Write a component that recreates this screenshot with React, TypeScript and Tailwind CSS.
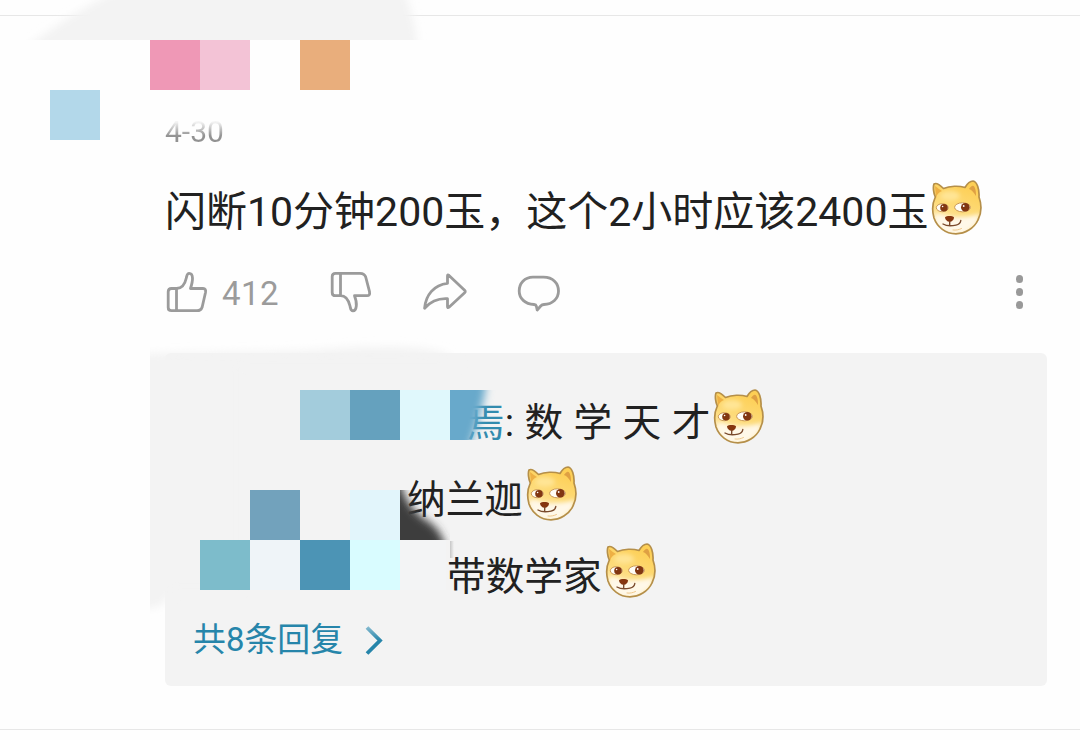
import { useId, type ReactNode } from 'react';

interface Reply {
  id: number;
  author?: string;
  text: string;
  className: string;
}

interface Tile {
  x: number;
  y: number;
  color: string;
}

const TILE_SIZE = 50;

const HEAD_PATH =
  'M4 4C7 2 11 6 13.5 8.5C20 5.8 29 5.6 35 7.5C37 4 40 1 43 1C47 1.5 49.5 9 49 17C51.5 24 51.500 33 48 40C44 48.500 35 53.800 26 53.800C15 53.800 7 46.500 4 38C2 31 2.500 23 5.300 17C3.500 13 2.800 7 4 4Z';

const replies: Reply[] = [
  { id: 1, author: '焉', text: ': 数 学 天 才', className: 'pl-[301px] [word-spacing:0.8px]' },
  { id: 2, text: '纳兰迦', className: 'pl-[242px]' },
  { id: 3, text: '带数学家', className: 'pl-[282px]' },
];

const tiles: Tile[] = [
  { x: 150, y: 40, color: '#ef98b6' },
  { x: 200, y: 40, color: '#f3c3d6' },
  { x: 300, y: 40, color: '#e9ae7c' },
  { x: 50, y: 90, color: '#b3d8ea' },
  { x: 300, y: 390, color: '#a3ccdc' },
  { x: 350, y: 390, color: '#65a1be' },
  { x: 400, y: 390, color: '#e0f8fc' },
  { x: 250, y: 490, color: '#72a2bc' },
  { x: 350, y: 490, color: '#e2f5fb' },
  { x: 200, y: 540, color: '#7dbccb' },
  { x: 250, y: 540, color: '#eff4f8' },
  { x: 300, y: 540, color: '#4c94b5' },
  { x: 350, y: 540, color: '#d9fcff' },
];

const Doge = () => {
  const id = useId();
  return (
    <svg width="54" height="56" viewBox="0 0 54 56" fill="none" className="shrink-0">
      <defs>
        <linearGradient id={`${id}fur`} x1="38" y1="6" x2="20" y2="54" gradientUnits="userSpaceOnUse">
          <stop offset="0" stopColor="#fdcf55" />
          <stop offset="0.5" stopColor="#fddb7a" />
          <stop offset="1" stopColor="#ffedc0" />
        </linearGradient>
        <filter id={`${id}soft`} x="-20%" y="-20%" width="140%" height="140%">
          <feGaussianBlur stdDeviation="2" />
        </filter>
        <clipPath id={`${id}head`}>
          <path d={HEAD_PATH} />
        </clipPath>
      </defs>
      <g clipPath={`url(#${id}head)`}>
        <rect width="54" height="56" fill={`url(#${id}fur)`} />
        <g filter={`url(#${id}soft)`}>
          <path d="M4 35C8 33 13 34 18 37C25 38 30 37 35 37C40 36 46 36 50 33L47 44L34 54H16L6 46Z" fill="#fff8e8" />
          <ellipse cx="20" cy="16" rx="10" ry="5" fill="#ffe595" />
        </g>
        <path d="M5 6C8 8 10 10 12 11C9 12 7 14 6 18Z" fill="#eeb044" />
        <path d="M39 9C41 6 43 4.500 44.500 7C46 10 46 13 46 16C44 13 42 10 39 9Z" fill="#dfa043" />
      </g>
      <path d={HEAD_PATH} stroke="#b58f49" strokeWidth="1.700" strokeLinejoin="round" />
      <ellipse cx="12.300" cy="27.700" rx="6" ry="4" fill="#fffdf6" stroke="#c4904b" strokeWidth="0.900" />
      <circle cx="14" cy="27.800" r="3.800" fill="#813611" />
      <circle cx="12.600" cy="26.500" r="0.800" fill="#fff" />
      <ellipse cx="32.500" cy="27.300" rx="7.900" ry="4.500" fill="#fffdf6" stroke="#c4904b" strokeWidth="0.900" />
      <circle cx="35.300" cy="27.300" r="4.300" fill="#813611" />
      <circle cx="33.700" cy="26" r="0.900" fill="#fff" />
      <path d="M15 37.300C16.500 35.500 22.500 35.500 24 37.300C24 40 21.500 42 19.700 42C17.700 42 15.200 40 15 37.300Z" fill="#85350f" />
      <path d="M19.700 41.500V44.500M13 44C16 45.800 22 46 26 45.100C29 44.500 30.500 42.800 30.800 40.500" stroke="#7a4a2c" strokeWidth="1.400" strokeLinecap="round" />
      <path d="M23 50C26 50.500 29 49.700 31.500 48.500" stroke="#f0c88c" strokeLinecap="round" />
    </svg>
  );
};

const Icon = ({ children }: { children: ReactNode }) => (
  <svg
    width="46"
    height="44"
    viewBox="0 0 46 44"
    fill="none"
    stroke="#9b9b9b"
    strokeWidth="2.800"
    strokeLinejoin="round"
    strokeLinecap="round"
    className="shrink-0"
  >
    {children}
  </svg>
);

const LikeIcon = () => (
  <Icon>
    <path d="M11.500 18.500H6.500Q3.200 18.500 3.200 21.800V37.500Q3.200 40.700 6.500 40.700H32Q36 40.700 37.200 37L40.500 22.500Q41.300 18.500 38 18.500H25.500C26.600 15 27.700 11.500 27.500 8C27.400 5.200 26 3.300 24.200 3.300C21.800 3.300 21.800 6 21.300 8C20 14 16.500 18.500 11.500 18.500V40.700" />
  </Icon>
);

const DislikeIcon = () => (
  <Icon>
    <path d="M11.500 25.700H6.500Q3.200 25.700 3.200 22.400V6.500Q3.200 3.300 6.500 3.300H31Q35.500 3.300 36.700 7L40.500 21.700Q41.300 25.700 38 25.700H25.500C26.600 28.500 27.800 32 27.300 36C27 39 25.800 40.800 24 40.800C21.500 40.800 21.500 38 21 36C19.500 30 16.500 25.700 11.500 25.700V3.300" />
  </Icon>
);

const ShareIcon = () => (
  <Icon>
    <path d="M25.500 5.700Q25.500 4.200 27 5.400L42.600 20.200Q43.900 21.500 42.600 22.800L27 37.200Q25.500 38.400 25.500 36.500V28.700C17 28.200 9 31 2.600 38.200C3.700 25 12 14.800 25.500 13.300Z" />
  </Icon>
);

const CommentIcon = () => (
  <Icon>
    <path d="M17 7.200H27.500C37 7.200 42.500 13.500 42.500 21C42.500 28.500 36.500 34.200 28 34.500Q26 34.600 24.700 36L21.200 40L20.300 36Q20 34.700 18 34.500C9 34 3.200 28.500 3.200 21C3.200 13.500 8.500 7.200 17 7.200Z" />
  </Icon>
);

// Brush strokes and pixel blocks that hide the user names and avatars
const Redaction = () => (
  <svg width="1080" height="740" viewBox="0 0 1080 740" className="absolute inset-0 pointer-events-none">
    <defs>
      <filter id="brush" x="-20%" y="-20%" width="140%" height="140%">
        <feGaussianBlur stdDeviation="4" />
      </filter>
      <clipPath id="headerArea">
        <rect width="1080" height="40" />
      </clipPath>
      <clipPath id="panelArea">
        <rect x="150" y="335" width="350" height="290" />
      </clipPath>
      <clipPath id="blueTile">
        <rect x="450" y="390" width="50" height="50" />
      </clipPath>
      <clipPath id="darkTile">
        <rect x="400" y="490" width="50" height="50" />
      </clipPath>
      <linearGradient id="tileShadow" x1="0" y1="0" x2="1" y2="0">
        <stop offset="0" stopColor="#c6c6c6" />
        <stop offset="1" stopColor="#f3f3f3" />
      </linearGradient>
    </defs>
    <g clipPath="url(#headerArea)">
      <path d="M20 52C60 22 95 -2 145 -20H400C408 0 416 22 418 52Z" fill="#f3f3f3" filter="url(#brush)" />
    </g>
    <g clipPath="url(#panelArea)">
      <path d="M130 354C190 352 280 353 330 349C380 346 415 345 445 353L460 365H240V590H172C168 599 164 612 130 608Z" fill="#f3f3f3" filter="url(#brush)" />
    </g>
    {tiles.map(({ x, y, color }) => (
      <rect key={`${x}-${y}`} x={x} y={y} width={TILE_SIZE} height={TILE_SIZE} fill={color} />
    ))}
    <rect x="400" y="540" width="46" height="50" fill="#f3f4f5" />
    <rect x="450" y="541" width="4" height="17" fill="url(#tileShadow)" />
    <g clipPath="url(#blueTile)">
      <path d="M430 370H487C487 395 480 415 466 460H430Z" fill="#67a9cb" filter="url(#brush)" />
    </g>
    <g clipPath="url(#darkTile)">
      <path d="M370 470L400 480C404 500 412 510 426 520C436 526 444 534 449 560H370Z" fill="#3c3c3c" filter="url(#brush)" />
    </g>
  </svg>
);

const App = () => (
  <div className="relative flex h-[740px] w-[1080px] flex-col overflow-hidden bg-[#fefefe] pt-[15px] font-['Roboto','Noto_Sans_CJK_SC',sans-serif] text-[#212121]">
    <div className="h-px shrink-0 bg-[#e7e7e7]" />
    <article className="flex flex-col pt-24 pl-[165px] pr-[33px]">
      <time className="h-10 w-fit bg-linear-to-b from-[#f4f4f4] from-25% to-[#929292] to-60% bg-clip-text text-[30px] leading-10 text-transparent">
        4-30
      </time>
      <div className="mt-[30px] flex h-[60px] items-center whitespace-nowrap text-[41px] leading-[60px]">
        <p>闪断10分钟200玉，这个2小时应该2400玉</p>
        <div className="-mt-2 ml-0.5">
          <Doge />
        </div>
      </div>
      <div className="mt-5 flex h-[60px] items-center text-[#9b9b9b]">
        <LikeIcon />
        <span className="ml-[11px] w-[107px] pt-1 text-[33px] tracking-[0.5px]">412</span>
        <DislikeIcon />
        <div className="ml-[47px]">
          <ShareIcon />
        </div>
        <div className="ml-12">
          <CommentIcon />
        </div>
        <div className="mr-6 ml-auto flex flex-col gap-[5.500px]">
          <span className="size-[7.500px] rounded-full bg-[#999999]" />
          <span className="size-[7.500px] rounded-full bg-[#999999]" />
          <span className="size-[7.500px] rounded-full bg-[#999999]" />
        </div>
      </div>
      <section className="mt-[31px] h-[333px] w-[882px] rounded-md bg-[#f3f3f3] pt-[31px]">
        {replies.map((reply) => (
          <div
            key={reply.id}
            className={`flex h-[77px] items-center whitespace-nowrap text-[38.700px] leading-[77px] ${reply.className}`}
          >
            <p>
              {reply.author && <span className="text-[#328bae]">{reply.author}</span>}
              {reply.text}
            </p>
            <div className="-mt-3 ml-0.5">
              <Doge />
            </div>
          </div>
        ))}
        <div className="flex h-[50px] items-center pl-7 text-[32.900px] leading-[50px] text-[#2685aa]">
          共8条回复
          <svg width="20" height="30" viewBox="0 0 20 30" fill="none" className="ml-[21px]">
            <defs>
              <linearGradient id="chevron" x1="0" y1="0" x2="0" y2="1">
                <stop offset="0" stopColor="#82b8ce" />
                <stop offset="0.5" stopColor="#2685aa" />
              </linearGradient>
            </defs>
            <path d="M3 2.500L16 15.500L3 28.500" stroke="url(#chevron)" strokeWidth="3.800" />
          </svg>
        </div>
      </section>
    </article>
    <div className="mt-[43px] h-px shrink-0 bg-[#e7e7e7]" />
    <Redaction />
  </div>
);

export default App;
